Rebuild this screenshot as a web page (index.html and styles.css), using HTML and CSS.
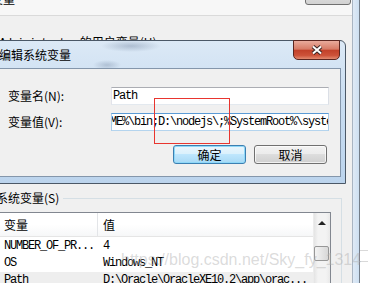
FILE: index.html
```html
<!DOCTYPE html>
<html lang="zh-CN">

<head>
    <meta charset="UTF-8">
    <title>编辑系统变量</title>
    <link rel="stylesheet" href="styles.css">
</head>

<body>

    <!-- 环境变量 window behind -->
    <div class="env">
        <div class="env-body">
            <div class="env-top">
                <span class="top-text">变量</span>
                <span class="top-btn"></span>
            </div>
            <div class="user-label"><span class="mono">Administrator</span> 的用户变量(U)</div>

            <div class="sys-group">
                <div class="sys-legend">系统变量(S)</div>
                <div class="list">
                    <div class="list-main">
                        <div class="list-head">
                            <span class="col1">变量</span>
                            <span class="col2">值</span>
                        </div>
                        <div class="list-row">
                            <span class="col1 mono">NUMBER_OF_PR...</span>
                            <span class="col2 mono">4</span>
                        </div>
                        <div class="list-row">
                            <span class="col1 mono">OS</span>
                            <span class="col2 mono">Windows_NT</span>
                        </div>
                        <div class="list-row selected">
                            <span class="col1 mono">Path</span>
                            <span class="col2 mono">D:\Oracle\OracleXE10.2\app\orac...</span>
                        </div>
                    </div>
                    <div class="scrollbar">
                        <div class="sb-up"><span class="sb-arrow"></span></div>
                        <div class="sb-thumb"></div>
                    </div>
                </div>
            </div>
        </div>
        <div class="env-frame"></div>
    </div>
    <div class="side">
        <div class="side-line"></div>
        <div class="side-line"></div>
    </div>

    <!-- 编辑系统变量 dialog -->
    <div class="dialog">
        <div class="dlg-title">
            <span class="dlg-caption">编辑系统变量</span>
            <span class="dlg-close">
                <svg width="12" height="10" viewBox="0 0 12 10">
                    <path d="M2 1.5 L10 8.5 M10 1.5 L2 8.5" stroke="#3a2624" stroke-width="4" />
                    <path d="M2 1.5 L10 8.5 M10 1.5 L2 8.5" stroke="#fff" stroke-width="2" />
                </svg>
            </span>
        </div>
        <div class="dlg-body">
            <div class="form">
                <label>变量名(N):</label>
                <div class="field"><span class="field-text">Path</span></div>
                <label>变量值(V):</label>
                <div class="field focus"><span class="field-text scrolled">%JAVA_HOME%\bin;D:\nodejs\;%SystemRoot%\system32;%SystemRoot%</span></div>
            </div>
            <div class="buttons">
                <span class="btn default">确定</span>
                <span class="btn">取消</span>
            </div>
        </div>
    </div>

    <div class="mark"></div>
    <div class="watermark">https://blog.csdn.net/Sky_fy_1314</div>

</body>

</html>
```

FILE: styles.css
```css
* {
    box-sizing: border-box;
}

body {
    margin: 0;
    width: 368px;
    height: 283px;
    overflow: hidden;
    position: relative;
    display: flex;
    background: #fff;
    font-family: "Noto Sans CJK SC", sans-serif;
    font-size: 12px;
    color: #000;
}

.mono {
    font-family: "Liberation Mono", "Noto Sans CJK SC", monospace;
    letter-spacing: -1.2px;
}

/* background window */
.env {
    display: flex;
    height: 283px;
}

.env-body {
    width: 353px;
    background: #f0f0f0;
    border-right: 1px solid #a9b5c3;
    overflow: hidden;
}

.env-frame {
    width: 7px;
    background: linear-gradient(to right, #dfeaf6, #cddff1);
    border-right: 1px solid #737d89;
}

.side {
    flex: 1;
    background: #fff;
    padding-top: 250px;
}

.side-line {
    height: 11px;
    border-top: 1px solid #d9d9d9;
}

.env-top {
    height: 16px;
    background: #f7f7f7;
    border-bottom: 1px solid #dadada;
    display: flex;
    justify-content: space-between;
    align-items: flex-start;
}

.top-text {
    margin: -8px 0 0 -9px;
    line-height: 14px;
}

.top-btn {
    width: 46px;
    height: 22px;
    margin: -17px 1px 0 0;
    border: 1px solid #707070;
    border-radius: 3px;
    background: linear-gradient(#ececec, #dcdcdc 60%, #d2d2d2);
}

.user-label {
    margin: 19px 0 0 -1px;
    line-height: 14px;
    white-space: nowrap;
}

.sys-group {
    margin: 147px 10px 0 -10px;
    border-top: 1px solid #d5dfe5;
    border-right: 1px solid #d5dfe5;
    height: 200px;
}

.sys-legend {
    width: max-content;
    margin: -8px 0 0 6px;
    padding-right: 4px;
    background: #f0f0f0;
    line-height: 14px;
}

.list {
    margin: 7px 10px 0 0;
    border: 1px solid #828790;
    background: #fff;
    display: grid;
    grid-template-columns: 1fr 17px;
    height: 120px;
}

.list-head {
    display: flex;
    height: 24px;
    border-bottom: 1px solid #e5e5e5;
    background: linear-gradient(#fff, #fff 50%, #f6f7f8);
    line-height: 23px;
}

.list-head .col1 {
    width: 107px;
    padding-left: 13px;
    border-right: 1px solid #e3e5e8;
}

.list-head .col2 {
    padding-left: 5px;
}

.list-row {
    display: flex;
    height: 17px;
    line-height: 17px;
    white-space: nowrap;
}

.list-head + .list-row {
    margin-top: 1px;
}

.list-row .col1 {
    width: 107px;
    padding-left: 13px;
}

.list-row .col2 {
    padding-left: 5px;
}

.list-row.selected {
    background: #eeeeee;
}

.scrollbar {
    background: linear-gradient(to right, #e4e4e4, #f3f3f3 25%, #f3f3f3 75%, #e9e9e9);
    border-left: 1px solid #ececec;
}

.sb-up {
    height: 17px;
    display: flex;
    justify-content: center;
    align-items: center;
}

.sb-arrow {
    width: 0;
    height: 0;
    border-left: 4px solid transparent;
    border-right: 4px solid transparent;
    border-bottom: 4px solid #222;
    margin-top: 3px;
}

.sb-thumb {
    margin: 16px 1px 0 0;
    height: 15px;
    border: 1px solid #979797;
    border-radius: 2px;
    background: linear-gradient(to right, #f3f3f3, #e6e6e6 50%, #d7d7d7);
}

/* edit dialog */
.dialog {
    position: absolute;
    left: -30px;
    top: 40px;
    width: 376px;
    height: 144px;
    border: 1px solid #4b5867;
    border-radius: 0 6px 0 0;
    background:
        radial-gradient(ellipse 30px 6px at 160px 5px, rgba(90, 110, 140, 0.35), transparent),
        radial-gradient(ellipse 14px 5px at 136px 24px, rgba(90, 110, 140, 0.3), transparent),
        linear-gradient(#dce9f6, #c9ddf1 40%, #bcd4ed);
    display: flex;
    flex-direction: column;
}

.dlg-title {
    height: 27px;
    display: flex;
    align-items: center;
    padding-left: 28px;
}

.dlg-caption {
    line-height: 14px;
}

.dlg-close {
    margin-left: auto;
    margin-right: 5px;
    align-self: flex-start;
    margin-top: -1px;
    width: 47px;
    height: 20px;
    border: 1px solid #5b2620;
    border-radius: 0 0 5px 5px;
    background: linear-gradient(#e9ab9c, #d77b66 45%, #c2412a 52%, #cd5239 80%, #e28a70);
    display: flex;
    justify-content: center;
    align-items: center;
}

.dlg-body {
    flex: 1;
    margin: 0 4px 6px 4px;
    border: 1px solid #8496ab;
    background: #f0f0f0;
    padding: 18px 0 0 32px;
}

.form {
    display: grid;
    grid-template-columns: 103px 218px;
    row-gap: 8px;
    align-items: center;
}

.form label {
    line-height: 14px;
}

.field {
    height: 18px;
    border: 1px solid;
    border-color: #abadb3 #dbdfe6 #e3e9ef #e2e3ea;
    background: #fff;
    overflow: hidden;
    white-space: nowrap;
    padding-left: 1px;
    font-family: "Liberation Mono", monospace;
    font-size: 12px;
    letter-spacing: -1.2px;
    line-height: 16px;
}

.field.focus {
    border-color: #5b9bd5 #a8cbea #b4d4ee #a8cbea;
}

.field-text.scrolled {
    display: inline-block;
    margin-left: -51px;
}

.buttons {
    display: flex;
    justify-content: flex-end;
    gap: 8px;
    margin: 14px 13px 0 0;
}

.btn {
    width: 73px;
    height: 19px;
    border: 1px solid #707070;
    border-radius: 3px;
    background: linear-gradient(#f2f2f2, #ebebeb 50%, #dddddd 50%, #cfcfcf);
    box-shadow: inset 0 0 0 1px rgba(255, 255, 255, 0.7);
    display: flex;
    justify-content: center;
    align-items: center;
    line-height: 14px;
}

.btn.default {
    border-color: #3c7fb1;
    background: linear-gradient(#eaf6fd, #d9f0fc 50%, #bee6fd 50%, #a7d9f5);
    box-shadow: inset 0 0 0 1px #8fd8f8;
}

/* annotation and watermark */
.mark {
    position: absolute;
    left: 154px;
    top: 98px;
    width: 76px;
    height: 46px;
    border: 1px solid #e8352f;
}

.watermark {
    position: absolute;
    left: 121px;
    top: 251px;
    font-family: "Liberation Sans", sans-serif;
    font-size: 16px;
    line-height: 18px;
    color: rgba(175, 175, 175, 0.45);
    white-space: nowrap;
}
```
